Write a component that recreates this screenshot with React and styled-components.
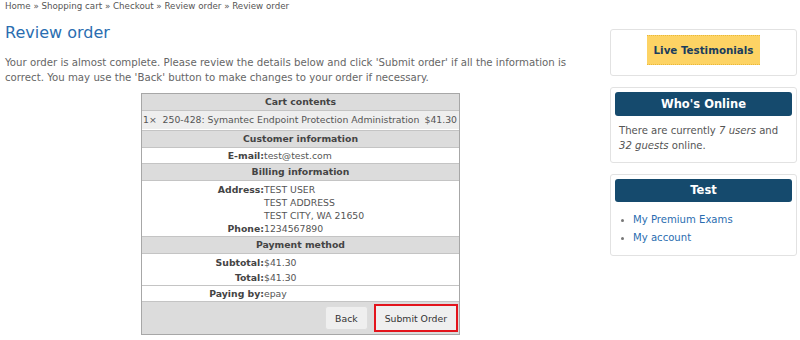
import React from "react";
import styled, { createGlobalStyle } from "styled-components";

const GlobalStyle = createGlobalStyle`
  body {
    margin: 0;
    background: #fff;
    font-family: "DejaVu Sans", Verdana, sans-serif;
    color: #555;
  }
`;

const Page = styled.div`
  display: flex;
  width: 800px;
  height: 340px;
  overflow: hidden;
  padding: 0 0 0 5px;
  box-sizing: border-box;
`;

const Main = styled.div`
  width: 591px;
  display: flex;
  flex-direction: column;
`;

const Crumbs = styled.div`
  font-size: 8.7px;
  line-height: 12px;
  color: #555;
`;

const Title = styled.h1`
  margin: 11px 0 0;
  font-size: 16px;
  font-weight: normal;
  line-height: 20px;
  color: #2a6db0;
`;

const Intro = styled.p`
  margin: 12px 0 0;
  font-size: 10.2px;
  line-height: 15px;
  color: #666;
`;

const Order = styled.div`
  width: 317px;
  margin: 8px auto 0;
  border: 1px solid #a7a7a7;
  background: #fff;
  font-size: 9.3px;
  color: #555;
`;

const Head = styled.div`
  background: #dcdcdc;
  border-top: ${p => (p.first ? "none" : "1px solid #c4c4c4")};
  border-bottom: 1px solid #c4c4c4;
  height: 16px;
  line-height: 16px;
  text-align: center;
  font-weight: bold;
  color: #444;
`;

const CartRow = styled.div`
  background: #eee;
  height: 18px;
  line-height: 18px;
  display: flex;
  justify-content: space-between;
  padding: 0 2px 0 1px;
  border-bottom: 1px solid #fff;
  white-space: pre;
`;

const Field = styled.div`
  display: grid;
  grid-template-columns: 122px 1fr;
  line-height: ${p => p.lh || 15}px;
  padding: ${p => p.pad || "0"};
  border-top: ${p => (p.divide ? "1px solid #c4c4c4" : "none")};
`;

const Label = styled.span`
  text-align: right;
  font-weight: bold;
  color: #444;
`;

const Value = styled.span`
  color: #555;
`;

const Actions = styled.div`
  background: #dcdcdc;
  border-top: 1px solid #c4c4c4;
  height: 32px;
  display: flex;
  align-items: center;
  justify-content: flex-end;
  gap: 6px;
  padding-right: 1px;
`;

const Button = styled.button`
  font-family: inherit;
  font-size: 9.3px;
  color: #333;
  background: #efefef;
  border: ${p => (p.primary ? "2px solid #e3141c" : "1px solid #ddd")};
  border-radius: ${p => (p.primary ? "0" : "3px")};
  height: ${p => (p.primary ? 28 : 24)}px;
  padding: 0 9px;
  cursor: pointer;
`;

const Side = styled.div`
  margin-left: 14px;
  width: 187px;
  display: flex;
  flex-direction: column;
  gap: 11px;
  padding-top: 29px;
`;

const Box = styled.div`
  border: 1px solid #e2e2e2;
  border-radius: 3px;
  padding: ${p => p.pad || "4px 4px 0 4px"};
  display: flex;
  flex-direction: column;
  align-items: ${p => (p.center ? "center" : "stretch")};
`;

const Testimonials = styled.div`
  background: #fdd364;
  border-top: 1px dotted #e9b73a;
  border-bottom: 1px dotted #e9b73a;
  color: #1a3d5d;
  font-weight: bold;
  font-size: 10.3px;
  padding: 0 7px;
  height: 28px;
  line-height: 28px;
`;

const BoxHead = styled.div`
  background: #154a6d;
  color: #fff;
  font-weight: bold;
  font-size: 11.5px;
  text-align: center;
  height: ${p => p.h || 24}px;
  line-height: ${p => p.h || 24}px;
  border-radius: 3px;
`;

const BoxText = styled.p`
  margin: 7px 4px 9px;
  font-size: 10.1px;
  line-height: 15px;
  color: #555;
`;

const Links = styled.ul`
  margin: 9px 0 8px;
  padding: 0 0 0 18px;
  font-size: 10.1px;
  line-height: 18px;
  color: #666;
  li::marker {
    font-size: 9px;
    color: #777;
  }
`;

const Link = styled.a`
  color: #2a6db0;
  text-decoration: none;
`;

export default function App() {
  return (
    <>
      <GlobalStyle />
      <Page>
        <Main>
          <Crumbs>Home » Shopping cart » Checkout » Review order » Review order</Crumbs>
          <Title>Review order</Title>
          <Intro>
            Your order is almost complete. Please review the details below and click 'Submit order' if all the information is
            correct. You may use the 'Back' button to make changes to your order if necessary.
          </Intro>
          <Order>
            <Head first>Cart contents</Head>
            <CartRow>
              <span>1×  250-428: Symantec Endpoint Protection Administration</span>
              <span>$41.30</span>
            </CartRow>
            <Head>Customer information</Head>
            <Field>
              <Label>E-mail:</Label>
              <Value>test@test.com</Value>
            </Field>
            <Head>Billing information</Head>
            <Field lh={13} pad="2px 0 0">
              <Label>Address:</Label>
              <Value>
                TEST USER
                <br />
                TEST ADDRESS
                <br />
                TEST CITY, WA 21650
              </Value>
            </Field>
            <Field lh={13} pad="0 0 1px">
              <Label>Phone:</Label>
              <Value>1234567890</Value>
            </Field>
            <Head>Payment method</Head>
            <Field pad="1px 0 0">
              <Label>Subtotal:</Label>
              <Value>$41.30</Value>
            </Field>
            <Field>
              <Label>Total:</Label>
              <Value>$41.30</Value>
            </Field>
            <Field divide>
              <Label>Paying by:</Label>
              <Value>epay</Value>
            </Field>
            <Actions>
              <Button>Back</Button>
              <Button primary>Submit Order</Button>
            </Actions>
          </Order>
        </Main>
        <Side>
          <Box center pad="5px 4px 10px">
            <Testimonials>Live Testimonials</Testimonials>
          </Box>
          <Box>
            <BoxHead>Who's Online</BoxHead>
            <BoxText>
              There are currently <em>7 users</em> and <em>32 guests</em> online.
            </BoxText>
          </Box>
          <Box>
            <BoxHead h={23}>Test</BoxHead>
            <Links>
              <li>
                <Link href="#">My Premium Exams</Link>
              </li>
              <li>
                <Link href="#">My account</Link>
              </li>
            </Links>
          </Box>
        </Side>
      </Page>
    </>
  );
}
